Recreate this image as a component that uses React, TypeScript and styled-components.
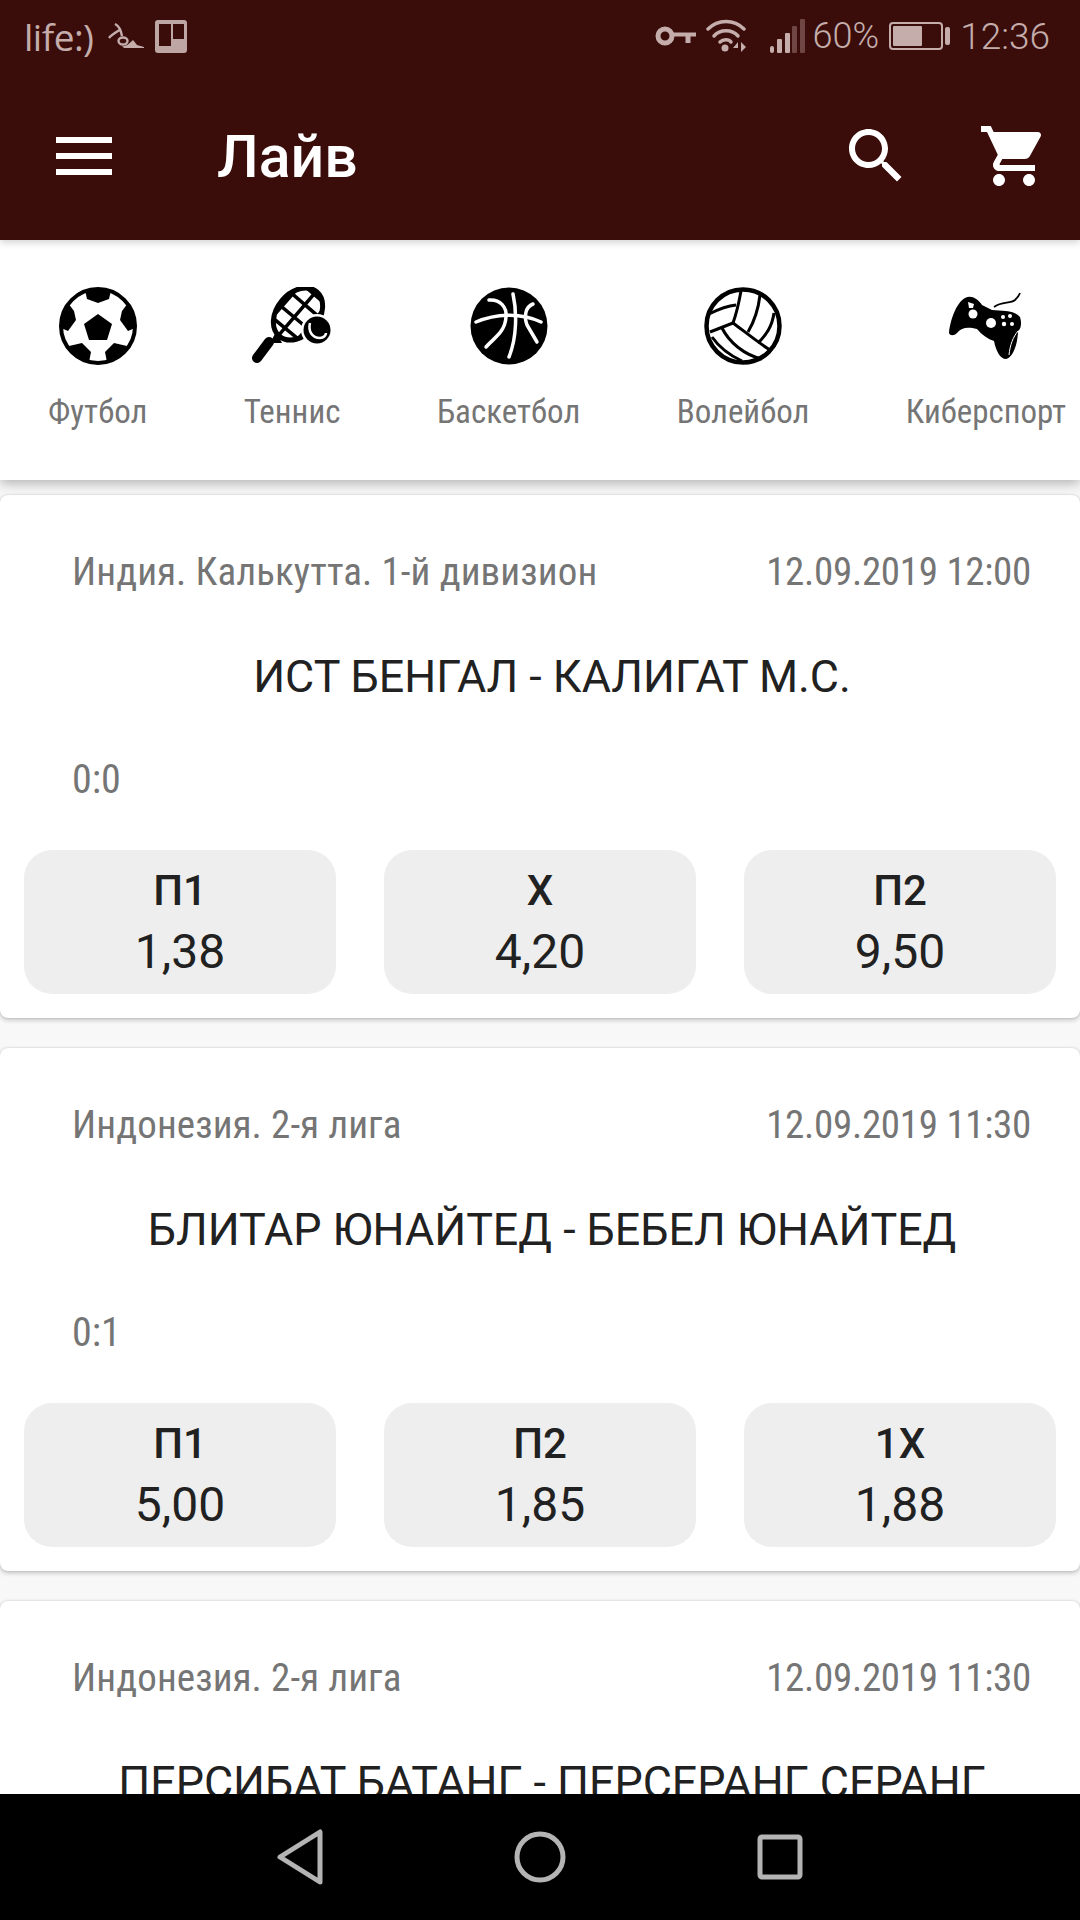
import React from "react";
import styled, { createGlobalStyle } from "styled-components";

const GlobalStyle = createGlobalStyle`
    html, body {
        margin: 0;
        padding: 0;
        background: #000;
    }
    * {
        box-sizing: border-box;
    }
`;

const Screen = styled.div`
    width: 1080px;
    height: 1920px;
    display: flex;
    flex-direction: column;
    overflow: hidden;
    background: #f8f8f8;
    font-family: Roboto, "Noto Sans", sans-serif;
`;

const TopBar = styled.header`
    height: 240px;
    flex: none;
    background: #3a0d0b;
    box-shadow: 0 2px 8px rgba(0, 0, 0, 0.2);
    position: relative;
    z-index: 3;
`;

const StatusBar = styled.div`
    height: 72px;
    padding: 0 30px 0 24px;
    display: flex;
    align-items: center;
    color: #c4adab;
    font-size: 36px;
`;

const Carrier = styled.span`
    font-family: "Open Sans", Roboto, sans-serif;
    font-size: 37px;
    letter-spacing: -0.5px;
    margin-right: 14px;
`;

const BoardSlot = styled.span`
    margin-left: 11px;
`;

const StatusRight = styled.div`
    margin-left: auto;
    display: flex;
    align-items: center;
`;

const Percent = styled.span`
    font-weight: 300;
    margin: 0 10px 0 8px;
`;

const Clock = styled.span`
    font-size: 37px;
    font-weight: 300;
    margin-left: 10px;
`;

const ActionBar = styled.div`
    height: 168px;
    padding: 0 30px 0 56px;
    display: flex;
    align-items: center;
    color: #fff;
`;

const Burger = styled.div`
    width: 56px;
    display: flex;
    flex-direction: column;
    gap: 10px;
    margin-right: 105px;

    span {
        height: 6px;
        background: #fff;
    }
`;

const Title = styled.h1`
    margin: 0;
    font-size: 59px;
    font-weight: 500;
    flex: 1;
`;

const ActionIcons = styled.div`
    display: flex;
    gap: 66px;

    svg {
        display: block;
        fill: #fff;
    }
`;

const SportBar = styled.nav`
    height: 240px;
    flex: none;
    padding: 47px 0 0 48px;
    display: flex;
    gap: 96.5px;
    overflow: hidden;
    background: #fff;
    box-shadow: 0 3px 12px rgba(0, 0, 0, 0.3);
    position: relative;
    z-index: 2;
`;

const Sport = styled.div`
    display: flex;
    flex-direction: column;
    align-items: center;
    flex: none;

    svg {
        display: block;
        height: 78px;
    }
`;

const Narrow = styled.span`
    font-stretch: 80%;
    color: #757575;
`;

const SportName = styled(Narrow)`
    margin-top: 27px;
    font-size: 33px;
    line-height: 40px;
`;

const List = styled.main`
    flex: 1;
    min-height: 0;
    overflow: hidden;
    padding-top: 15px;
    display: flex;
    flex-direction: column;
    gap: 30px;
`;

const Card = styled.article`
    flex: none;
    height: 523px;
    padding-top: 56px;
    background: #fff;
    border-radius: 8px;
    box-shadow: 0 0 2px rgba(0, 0, 0, 0.16), 0 2px 5px rgba(0, 0, 0, 0.22);
`;

const MetaRow = styled.div`
    height: 41px;
    padding: 0 49px 0 72px;
    display: flex;
    justify-content: space-between;
    align-items: center;
    font-size: 39px;
`;

const League = styled(Narrow)`
    letter-spacing: 0.1px;
`;

const KickOff = styled(Narrow)`
    letter-spacing: -0.3px;
`;

const Match = styled.div`
    margin-top: 56px;
    padding-left: 24px;
    height: 56px;
    text-align: center;
    font-size: 44.8px;
    line-height: 57px;
    color: #212121;
`;

const Score = styled(Narrow)`
    display: block;
    margin: 55px 0 0 72px;
    height: 40px;
    font-size: 40px;
    line-height: 41px;
`;

const Odds = styled.div`
    margin-top: 51px;
    padding: 0 24px;
    display: flex;
    gap: 48px;
`;

const Odd = styled.button`
    flex: 1;
    height: 144px;
    padding: 14px 0 0;
    border: 0;
    border-radius: 28px;
    background: #eee;
    color: #212121;
    font-family: inherit;
    display: flex;
    flex-direction: column;
    align-items: center;
`;

const OddName = styled.span`
    font-size: 42px;
    font-weight: 500;
    line-height: 54px;
`;

const OddValue = styled.span`
    font-size: 48px;
    line-height: 68px;
`;

const SoftKeys = styled.footer`
    height: 126px;
    flex: none;
    background: #000;
    display: flex;
    justify-content: center;
    align-items: center;
    gap: 180px;
    position: relative;
    z-index: 3;

    svg {
        display: block;
        fill: none;
        stroke: #b4b4b4;
        stroke-width: 5;
        stroke-linejoin: round;
    }
`;

const AntIcon = () => (
    <svg width="36" height="26" viewBox="0 0 36 26" fill="none" stroke="#c4adab" strokeWidth="2.4" style={{ display: "block" }}>
        <path d="M7 1 C11 3 13 7 14 13 M13 6 C9 9 4 11 1 15" />
        <ellipse cx="15" cy="18" rx="4.5" ry="3.5" />
        <path d="M14 23 C18 24 22 20 25 17 L29 22 L36 24 V25 L16 25 Z" fill="#c4adab" stroke="none" />
    </svg>
);

const BoardIcon = () => (
    <svg width="32" height="33" viewBox="0 0 32 33" style={{ display: "block" }}>
        <rect width="32" height="33" rx="3" fill="#bda6a4" />
        <rect x="4" y="4" width="12" height="22" fill="#3a0d0b" />
        <rect x="18" y="4" width="11" height="15" fill="#3a0d0b" />
    </svg>
);

const KeyIcon = () => (
    <svg width="41" height="20" viewBox="0 0 41 20" fill="none" stroke="#c4adab" style={{ display: "block" }}>
        <circle cx="10" cy="10" r="7" strokeWidth="5" />
        <path d="M17 8.5H41" strokeWidth="4" />
        <path d="M33 8V17" strokeWidth="5" />
    </svg>
);

const WifiIcon = () => (
    <svg width="40" height="34" viewBox="0 0 40 34" fill="none" stroke="#c4adab" strokeWidth="3.5" strokeLinecap="round" style={{ display: "block", marginLeft: 10 }}>
        <path d="M2 10 C12 0 28 0 38 10" />
        <path d="M8 17 C14 10 26 10 32 17" />
        <path d="M14 23 C17 20 23 20 25 23" />
        <circle cx="19" cy="29" r="3.5" fill="#c4adab" stroke="none" />
        <path d="M32 23 L27 29 H32 Z M35 23 L40 28 L35 33 Z" fill="#c4adab" stroke="none" />
    </svg>
);

const SignalIcon = () => (
    <svg width="35" height="35" viewBox="0 0 35 35" style={{ display: "block", marginLeft: 24 }}>
        <rect x="0" y="27" width="4" height="7" rx="2" fill="#c4adab" />
        <rect x="7" y="20" width="5" height="14" rx="1" fill="#c4adab" />
        <rect x="15" y="14" width="5" height="20" rx="1" fill="#c4adab" />
        <rect x="22" y="7" width="5" height="27" rx="1" fill="#6f4643" />
        <rect x="30" y="0" width="5" height="34" rx="1" fill="#6f4643" />
    </svg>
);

const BatteryIcon = () => (
    <svg width="61" height="28" viewBox="0 0 61 28" style={{ display: "block" }}>
        <rect x="1" y="1" width="52" height="26" rx="3" fill="none" stroke="#c4adab" strokeWidth="2" />
        <rect x="4" y="4" width="29" height="20" rx="1" fill="#c4adab" />
        <rect x="56" y="5" width="5" height="18" rx="2" fill="#c4adab" />
    </svg>
);

const SearchIcon = () => (
    <svg width="72" height="72" viewBox="0 0 24 24">
        <path d="M15.5 14h-.79l-.28-.27C15.41 12.59 16 11.11 16 9.5 16 5.91 13.09 3 9.5 3S3 5.91 3 9.5 5.91 16 9.5 16c1.61 0 3.09-.59 4.23-1.57l.27.28v.79l5 4.99L20.49 19l-4.99-5zm-6 0C7.01 14 5 11.99 5 9.5S7.01 5 9.5 5 14 7.01 14 9.5 11.99 14 9.5 14z" />
    </svg>
);

const CartIcon = () => (
    <svg width="72" height="72" viewBox="0 0 24 24">
        <path d="M7 18c-1.1 0-1.99.9-1.99 2S5.9 22 7 22s2-.9 2-2-.9-2-2-2zM1 2v2h2l3.6 7.59-1.35 2.45c-.16.28-.25.61-.25.96 0 1.1.9 2 2 2h12v-2H7.42c-.14 0-.25-.11-.25-.25l.03-.12.9-1.63h7.45c.75 0 1.41-.41 1.75-1.03l3.58-6.49c.08-.14.12-.31.12-.48 0-.55-.45-1-1-1H5.21l-.94-2H1zm16 16c-1.1 0-1.99.9-1.99 2s.89 2 1.99 2 2-.9 2-2-.9-2-2-2z" />
    </svg>
);

const FootballIcon = () => (
    <svg width="78" height="78" viewBox="0 0 78 78">
        <circle cx="39" cy="39" r="37" fill="#fff" stroke="#000" strokeWidth="4" />
        <path d="M39 27 L53 37 L48 53 L30 53 L25 37 Z" />
        <path d="M26 3 H52 L50 12 L39 16 L28 12 Z" />
        <path d="M9 16 L15 24 L17 33 L9 44 L2 41 L2 28 Z" />
        <path d="M69 16 L63 24 L61 33 L69 44 L76 41 L76 28 Z" />
        <path d="M10 59 L23 56 L32 65 L30 75 L19 72 Z" />
        <path d="M68 59 L55 56 L46 65 L48 75 L59 72 Z" />
    </svg>
);

const TennisIcon = () => (
    <svg width="85" height="78" viewBox="0 0 85 78">
        <defs>
            <clipPath id="racket-head">
                <ellipse cx="48" cy="27" rx="29" ry="21" transform="rotate(-50 48 27)" />
            </clipPath>
        </defs>
        <ellipse cx="48" cy="27" rx="29" ry="21" transform="rotate(-50 48 27)" fill="#fff" stroke="#000" strokeWidth="5" />
        <g clipPath="url(#racket-head)" stroke="#000" strokeWidth="3.5">
            <path d="M20 10 L80 60 M12 22 L70 70 M32 -2 L90 48 M44 -10 L100 38" />
            <path d="M10 44 L54 -6 M22 56 L70 0 M36 66 L84 10" />
        </g>
        <path d="M26 45 L20 56 L32 56" fill="#000" />
        <path d="M19 55 L7 71" stroke="#000" strokeWidth="10" strokeLinecap="round" />
        <circle cx="67" cy="43" r="16" fill="#fff" />
        <circle cx="67" cy="43" r="13.5" />
        <path d="M60 36 C58 44 62 51 70 51 C74 51 76 48 76 46" fill="none" stroke="#fff" strokeWidth="2.5" />
    </svg>
);

const BasketballIcon = () => (
    <svg width="78" height="78" viewBox="0 0 78 78">
        <circle cx="39" cy="39" r="38.5" />
        <g fill="none" stroke="#fff" strokeWidth="3.5" strokeLinecap="round">
            <path d="M43 7 C47 25 47 50 39 70" />
            <path d="M6 35 C25 27 50 25 71 35" />
            <path d="M19 13 C30 12 37 20 36 30 C35 45 25 50 16 60" />
            <path d="M63 17 C55 20 54 30 57 38 L67 55" />
        </g>
    </svg>
);

const VolleyballIcon = () => (
    <svg width="78" height="78" viewBox="0 0 78 78">
        <circle cx="39" cy="39" r="36.5" fill="#fff" stroke="#000" strokeWidth="4.5" />
        <g fill="none" stroke="#000" strokeWidth="3">
            <path d="M29 36 C33 25 35 15 37 4" />
            <path d="M29 36 L6 45" />
            <path d="M29 36 C40 44 52 54 66 63" />
            <path d="M5 27 C15 22 22 19 32 18" />
            <path d="M56 8 C54 25 50 35 44 45" />
            <path d="M70 26 C68 40 62 48 54 56" />
            <path d="M18 41 C25 55 40 68 58 72" />
            <path d="M8 50 C15 60 25 68 38 74" />
        </g>
    </svg>
);

const GamepadIcon = () => (
    <svg width="75" height="78" viewBox="18 6 75 78">
        <path d="M19 52 C20 40 26 22 35 17 C41 14 47 17 52 24 L62 29 C72 30 84 29 90 36 C92 42 91 48 88 50 C88 60 84 76 76 78 C70 78 66 70 64 60 C58 58 52 54 47 48 C38 46 32 46 27 52 C24 55 20 55 19 52 Z" />
        <path d="M64 26 C72 20 80 23 85 19 C87 17 89 15 90 12" fill="none" stroke="#000" strokeWidth="1.8" />
        <g fill="#fff">
            <circle cx="43" cy="33" r="4.5" />
            <circle cx="61" cy="42" r="5" />
            <circle cx="73" cy="36" r="2" />
            <circle cx="80" cy="35" r="2" />
            <circle cx="74" cy="43" r="2.2" />
            <circle cx="82" cy="43" r="2" />
            <path d="M38 21 L44 23 L43 27 L39 27 Z" />
        </g>
        <path d="M88 50 C83 56 80 64 79 74" fill="none" stroke="#fff" strokeWidth="1" />
    </svg>
);

const sports = [
    { name: "Футбол", icon: <FootballIcon /> },
    { name: "Теннис", icon: <TennisIcon /> },
    { name: "Баскетбол", icon: <BasketballIcon /> },
    { name: "Волейбол", icon: <VolleyballIcon /> },
    { name: "Киберспорт", icon: <GamepadIcon /> },
];

const matches = [
    {
        league: "Индия. Калькутта. 1-й дивизион",
        date: "12.09.2019 12:00",
        title: "ИСТ БЕНГАЛ - КАЛИГАТ М.С.",
        score: "0:0",
        odds: [["П1", "1,38"], ["Х", "4,20"], ["П2", "9,50"]],
    },
    {
        league: "Индонезия. 2-я лига",
        date: "12.09.2019 11:30",
        title: "БЛИТАР ЮНАЙТЕД - БЕБЕЛ ЮНАЙТЕД",
        score: "0:1",
        odds: [["П1", "5,00"], ["П2", "1,85"], ["1Х", "1,88"]],
    },
    {
        league: "Индонезия. 2-я лига",
        date: "12.09.2019 11:30",
        title: "ПЕРСИБАТ БАТАНГ - ПЕРСЕРАНГ СЕРАНГ",
        score: "",
        odds: [],
    },
];

export default function App() {
    return (
        <Screen>
            <GlobalStyle />
            <TopBar>
                <StatusBar>
                    <Carrier>life:)</Carrier>
                    <AntIcon />
                    <BoardSlot>
                        <BoardIcon />
                    </BoardSlot>
                    <StatusRight>
                        <KeyIcon />
                        <WifiIcon />
                        <SignalIcon />
                        <Percent>60%</Percent>
                        <BatteryIcon />
                        <Clock>12:36</Clock>
                    </StatusRight>
                </StatusBar>
                <ActionBar>
                    <Burger>
                        <span />
                        <span />
                        <span />
                    </Burger>
                    <Title>Лайв</Title>
                    <ActionIcons>
                        <SearchIcon />
                        <CartIcon />
                    </ActionIcons>
                </ActionBar>
            </TopBar>
            <SportBar>
                {sports.map((sport) => (
                    <Sport key={sport.name}>
                        {sport.icon}
                        <SportName>{sport.name}</SportName>
                    </Sport>
                ))}
            </SportBar>
            <List>
                {matches.map((match) => (
                    <Card key={match.title}>
                        <MetaRow>
                            <League>{match.league}</League>
                            <KickOff>{match.date}</KickOff>
                        </MetaRow>
                        <Match>{match.title}</Match>
                        <Score>{match.score}</Score>
                        <Odds>
                            {match.odds.map(([name, value]) => (
                                <Odd key={name}>
                                    <OddName>{name}</OddName>
                                    <OddValue>{value}</OddValue>
                                </Odd>
                            ))}
                        </Odds>
                    </Card>
                ))}
            </List>
            <SoftKeys>
                <svg width="60" height="60" viewBox="0 0 60 60">
                    <path d="M50 5 V55 L10 30 Z" />
                </svg>
                <svg width="60" height="60" viewBox="0 0 60 60">
                    <circle cx="30" cy="30" r="23" />
                </svg>
                <svg width="60" height="60" viewBox="0 0 60 60">
                    <rect x="10" y="10" width="40" height="40" rx="2" />
                </svg>
            </SoftKeys>
        </Screen>
    );
}
